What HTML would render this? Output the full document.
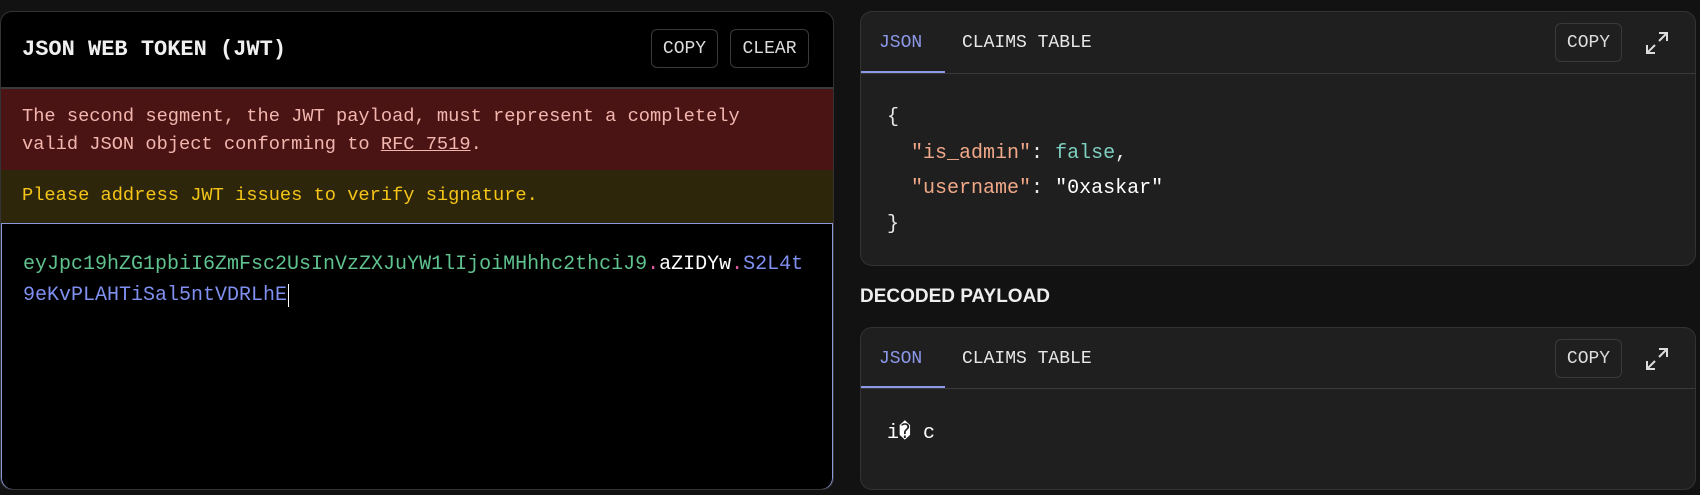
<!DOCTYPE html>
<html><head><style>
*{box-sizing:border-box;margin:0;padding:0}
body{width:1700px;height:495px;background:#121212;position:relative;overflow:hidden;font-family:"Liberation Mono",monospace;color:#e8e8e8}
.abs{position:absolute}
.left{left:0;top:11px;width:834px;height:479px;background:#000;border:1px solid #333;border-radius:12px;overflow:hidden}
.btn{position:absolute;border:1px solid #3a3a3a;border-radius:6px;font-size:18px;color:#ddd;display:flex;align-items:center;justify-content:center}
.red{position:absolute;left:0;top:75px;width:100%;height:83px;background:#4a1414;border-top:2px solid #3a3a3a;color:#f2b6ae;font-size:18.7px;line-height:28px;padding:13px 0 0 21px}
.yel{position:absolute;left:0;top:158px;width:100%;height:53px;background:#2d260a;color:#f5c518;font-size:18.7px;padding:14px 0 0 21px}
.ta{position:absolute;left:0;top:211px;width:100%;height:267px;border:1px solid #8c98d8;border-radius:0 0 12px 12px;font-size:20px;line-height:31px;padding:25px 0 0 21px}
.g{color:#5fc28f}.b{color:#8090f0}.p{color:#e05aa0}.w{color:#fff}
.panel{position:absolute;left:860px;width:836px;background:#1f1f1f;border:1px solid #333;border-radius:12px;overflow:hidden}
.tab{position:absolute;top:0;font-size:18px}
.ul{position:absolute;left:0;width:84px;height:3px;background:#8c98e8}
.sep{position:absolute;left:0;width:100%;height:1px;background:#3a3a3a}
</style></head><body>
<div class="abs left">
 <div class="abs" style="left:21px;top:25px;font-size:22px;font-weight:bold;color:#f0f0f0">JSON WEB TOKEN (JWT)</div>
 <div class="btn" style="left:650px;top:17px;width:67px;height:39px">COPY</div>
 <div class="btn" style="left:729px;top:17px;width:79px;height:39px">CLEAR</div>
 <div class="red">The second segment, the JWT payload, must represent a completely<br>valid JSON object conforming to <u>RFC 7519</u>.</div>
 <div class="yel">Please address JWT issues to verify signature.</div>
 <div class="ta"><span class="g">eyJpc19hZG1pbiI6ZmFsc2UsInVzZXJuYW1lIjoiMHhhc2thciJ9</span><span class="p">.</span><span class="w">aZIDYw</span><span class="p">.</span><span class="b">S2L4t<br>9eKvPLAHTiSal5ntVDRLhE</span><span style="border-left:1px solid #fff;margin-left:1px"></span></div>
</div>

<div class="panel" style="top:11px;height:255px">
 <div class="tab" style="left:18px;top:21px;color:#8c98e8">JSON</div>
 <div class="tab" style="left:101px;top:21px;color:#e8e8e8">CLAIMS TABLE</div>
 <div class="ul" style="top:59px"></div>
 <div class="sep" style="top:61px"></div>
 <div class="btn" style="left:694px;top:11px;width:67px;height:39px">COPY</div>
 <svg class="abs" style="left:784px;top:19px" width="24" height="24" viewBox="0 0 24 24" fill="none" stroke="#ddd" stroke-width="2"><path d="M14 2h8v8M22 2l-8 8M10 22H2v-8M2 22l8-8"/></svg>
 <div class="abs" style="left:26px;top:88px;font-size:20px;line-height:35.5px;white-space:pre">{
  <span style="color:#f0a888">"is_admin"</span>: <span style="color:#7ecfc0">false</span>,
  <span style="color:#f0a888">"username"</span>: <span style="color:#fff">"0xaskar"</span>
}</div>
</div>
<div class="abs" style="left:860px;top:286px;font-family:'Liberation Sans',sans-serif;font-weight:bold;font-size:19px;color:#eee">DECODED PAYLOAD</div>
<div class="panel" style="top:327px;height:163px">
 <div class="tab" style="left:18px;top:21px;color:#8c98e8">JSON</div>
 <div class="tab" style="left:101px;top:21px;color:#e8e8e8">CLAIMS TABLE</div>
 <div class="ul" style="top:58px"></div>
 <div class="sep" style="top:60px"></div>
 <div class="btn" style="left:694px;top:11px;width:67px;height:39px">COPY</div>
 <svg class="abs" style="left:784px;top:19px" width="24" height="24" viewBox="0 0 24 24" fill="none" stroke="#ddd" stroke-width="2"><path d="M14 2h8v8M22 2l-8 8M10 22H2v-8M2 22l8-8"/></svg>
 <div class="abs" style="left:26px;top:91px;font-size:20px;color:#fff">i&#xFFFD; c</div>
</div>
</body></html>
